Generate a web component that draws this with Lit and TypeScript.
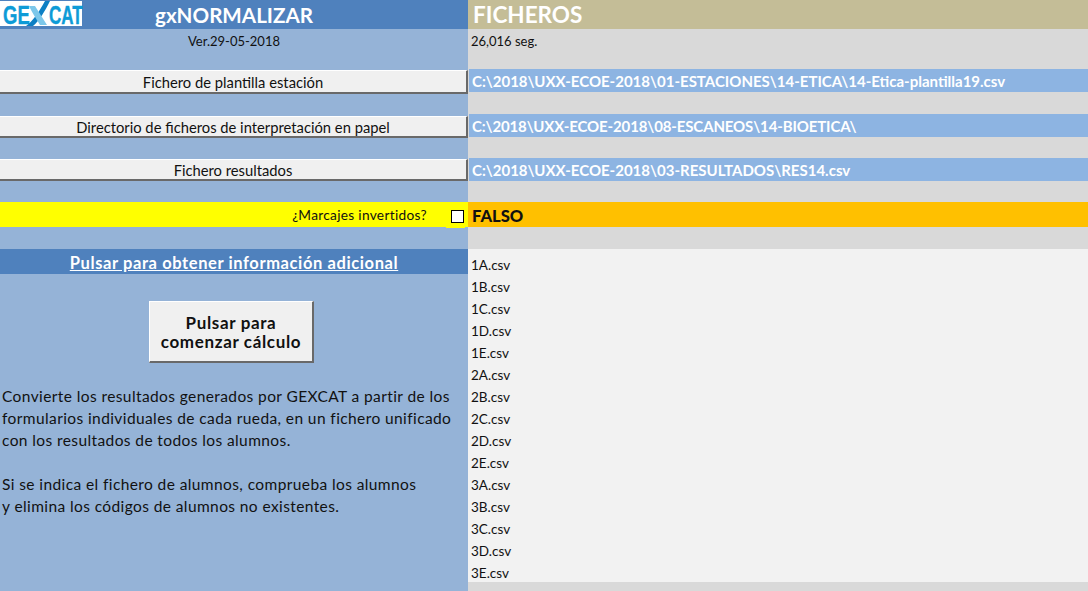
import { LitElement, html, css } from "lit";
import { customElement } from "lit/decorators.js";

const files = ["1A","1B","1C","1D","1E","2A","2B","2C","2D","2E","3A","3B","3C","3D","3E"].map(f => f + ".csv");

@customElement("app-root")
export class AppRoot extends LitElement {
  static styles = css`
    :host { display: block; width: 1088px; height: 591px; overflow: hidden; font-family: "Lato", "Liberation Sans", sans-serif; color: #111; font-size: 14px; }
    .sheet { display: grid; grid-template-columns: 468px 620px; height: 591px; }
    .left { background: #95b3d7; display: flex; flex-direction: column; }
    .right { background: #d9d9d9; display: flex; flex-direction: column; }
    .head { height: 29px; background: #4f81bd; display: flex; align-items: flex-start; position: relative; flex: none; }
    .logo { width: 82px; height: 25px; margin-top: 1px; padding-top: 2px; box-sizing: border-box; background: #fff; position: relative; color: #0d9bd7; font: 700 25px/25px "Liberation Sans", sans-serif; -webkit-text-stroke: .4px #0d9bd7; display: flex; }
    .logo span { display: block; transform-origin: 0 50%; white-space: nowrap; flex: none; }
    .ge { margin-left: 3px; margin-right: -10px; transform: scaleX(.74); }
    .cat { margin-left: 20px; margin-right: -18px; transform: scaleX(.68); }
    .x { position: absolute; left: 24px; top: 0; }
    .title { position: absolute; left: 0; right: 0; top: 3px; text-align: center; color: #fff; font-size: 20.6px; line-height: 25px; font-weight: 700; }
    .ver { height: 41px; text-align: center; font-size: 13px; padding-top: 4px; box-sizing: border-box; flex: none; }
    .btn { height: 22px; box-sizing: border-box; background: #f0f0f0; border-top: 1px solid #fff; border-bottom: 2px solid #696969; border-right: 2px solid #696969; display: flex; align-items: center; justify-content: center; font-size: 14.75px; flex: none; }
    .tall { height: 24px; }
    .g21 { height: 21px; flex: none; }
    .g22 { height: 22px; flex: none; }
    .yellow { height: 25px; background: #ffff00; display: flex; align-items: flex-start; justify-content: flex-end; font-size: 13.7px; letter-spacing: .3px; line-height: 25px; flex: none; }
    .yellow span { margin-right: 19px; }
    .box { width: 19px; height: 26px; background: #ffff00; margin-right: 3px; padding: 8px 0 0 5px; box-sizing: border-box; flex: none; }
    .check { width: 13px; height: 13px; box-sizing: border-box; border: 1px solid #000; background: #fff; }
    .link { height: 25px; padding-top: 2px; box-sizing: border-box; background: #4f81bd; color: #fff; font-weight: 700; font-size: 16.5px; letter-spacing: .6px; text-decoration: underline; display: flex; align-items: center; justify-content: center; flex: none; }
    .calc { margin: 27px 0 0 149px; width: 165px; height: 62px; box-sizing: border-box; background: #f0f0f0; border-top: 1px solid #fff; border-left: 1px solid #fff; border-right: 2px solid #696969; border-bottom: 2px solid #696969; display: flex; align-items: center; justify-content: center; text-align: center; font-weight: 700; font-size: 17px; letter-spacing: .65px; line-height: 19px; flex: none; }
    .para { margin: 22px 0 0 2px; font-size: 15.5px; letter-spacing: .4px; line-height: 22px; white-space: pre; }
    .rh { height: 29px; background: #c4bd97; color: #fff; font-size: 22.5px; font-weight: 700; padding-left: 5px; display: flex; align-items: center; box-sizing: border-box; flex: none; }
    .time { height: 40px; font-size: 13px; padding: 4px 0 0 3px; box-sizing: border-box; flex: none; }
    .path { height: 23px; margin-left: 1px; background: #8db4e2; color: #fff; font-weight: 700; font-size: 15px; padding-left: 3px; display: flex; align-items: center; box-sizing: border-box; flex: none; }
    .tight { letter-spacing: -.13px; }
    .falso { height: 25px; padding-top: 2px; background: #ffc000; font-size: 16.6px; font-weight: 900; padding-left: 4px; display: flex; align-items: center; box-sizing: border-box; flex: none; }
    .list { background: #f2f2f2; height: 333px; margin-top: 22px; padding-top: 5px; box-sizing: border-box; flex: none; }
    .list div { height: 22px; line-height: 22px; font-size: 13.5px; padding-left: 3px; }
  `;

  render() {
    return html`<div class="sheet">
      <section class="left">
        <div class="head">
          <div class="logo">
            <span class="ge">GE</span><span class="cat">CAT</span>
            <svg class="x" width="28" height="25" viewBox="0 0 28 25">
              <path d="M2 25 C9 20 15 11 21 0 L26 0 C21 10 15 20 9 25 Z" fill="#0d7fc4"/>
              <path d="M5 5 L11 5 C15 11 19 18 23 24 L16 24 C12 18 8 11 5 5 Z" fill="#7cc7ea"/>
            </svg>
          </div>
          <div class="title">gxNORMALIZAR</div>
        </div>
        <div class="ver">Ver.29-05-2018</div>
        <div class="btn tall">Fichero de plantilla estación</div>
        <div class="g22"></div>
        <div class="btn">Directorio de ficheros de interpretación en papel</div>
        <div class="g21"></div>
        <div class="btn">Fichero resultados</div>
        <div class="g21"></div>
        <div class="yellow"><span>¿Marcajes invertidos?</span><div class="box"><div class="check"></div></div></div>
        <div class="g22"></div>
        <div class="link">Pulsar para obtener información adicional</div>
        <div class="calc">Pulsar para<br />comenzar cálculo</div>
        <div class="para">Convierte los resultados generados por GEXCAT a partir de los
formularios individuales de cada rueda, en un fichero unificado
con los resultados de todos los alumnos.

Si se indica el fichero de alumnos, comprueba los alumnos
y elimina los códigos de alumnos no existentes.</div>
      </section>
      <section class="right">
        <div class="rh">FICHEROS</div>
        <div class="time">26,016 seg.</div>
        <div class="path">C:\\2018\\UXX-ECOE-2018\\01-ESTACIONES\\14-ETICA\\14-Etica-plantilla19.csv</div>
        <div class="g22"></div>
        <div class="path tight">C:\\2018\\UXX-ECOE-2018\\08-ESCANEOS\\14-BIOETICA\\</div>
        <div class="g21"></div>
        <div class="path">C:\\2018\\UXX-ECOE-2018\\03-RESULTADOS\\RES14.csv</div>
        <div class="g21"></div>
        <div class="falso">FALSO</div>
        <div class="list">${files.map(f => html`<div>${f}</div>`)}</div>
      </section>
    </div>`;
  }
}
